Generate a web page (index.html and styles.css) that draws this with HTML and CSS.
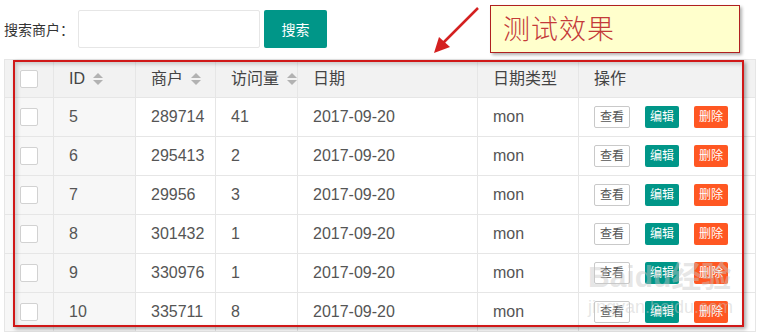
FILE: index.html
```html
<html>

<head>
  <link rel="stylesheet" href="styles.css">
</head>

<body>
  <div class="search-bar">
    <span class="search-label">搜索商户：</span>
    <input class="search-input" type="text">
    <button class="btn btn-main">搜索</button>
  </div>

  <table class="data-table">
    <colgroup>
      <col style="width: 49px">
      <col style="width: 82px">
      <col style="width: 80px">
      <col style="width: 82px">
      <col style="width: 180px">
      <col style="width: 101px">
      <col style="width: 177px">
    </colgroup>
    <thead>
      <tr>
        <th><span class="check"></span></th>
        <th>ID <span class="sort"><i class="up"></i><i class="down"></i></span></th>
        <th>商户 <span class="sort"><i class="up"></i><i class="down"></i></span></th>
        <th>访问量 <span class="sort"><i class="up"></i><i class="down"></i></span></th>
        <th>日期</th>
        <th>日期类型</th>
        <th>操作</th>
      </tr>
    </thead>
    <tbody>
      <tr>
        <td class="fixed"><span class="check"></span></td>
        <td class="fixed">5</td>
        <td>289714</td>
        <td>41</td>
        <td>2017-09-20</td>
        <td>mon</td>
        <td><div class="ops"><span class="btn-xs plain">查看</span><span class="btn-xs green">编辑</span><span class="btn-xs orange">删除</span></div></td>
      </tr>
      <tr>
        <td class="fixed"><span class="check"></span></td>
        <td class="fixed">6</td>
        <td>295413</td>
        <td>2</td>
        <td>2017-09-20</td>
        <td>mon</td>
        <td><div class="ops"><span class="btn-xs plain">查看</span><span class="btn-xs green">编辑</span><span class="btn-xs orange">删除</span></div></td>
      </tr>
      <tr>
        <td class="fixed"><span class="check"></span></td>
        <td class="fixed">7</td>
        <td>29956</td>
        <td>3</td>
        <td>2017-09-20</td>
        <td>mon</td>
        <td><div class="ops"><span class="btn-xs plain">查看</span><span class="btn-xs green">编辑</span><span class="btn-xs orange">删除</span></div></td>
      </tr>
      <tr>
        <td class="fixed"><span class="check"></span></td>
        <td class="fixed">8</td>
        <td>301432</td>
        <td>1</td>
        <td>2017-09-20</td>
        <td>mon</td>
        <td><div class="ops"><span class="btn-xs plain">查看</span><span class="btn-xs green">编辑</span><span class="btn-xs orange">删除</span></div></td>
      </tr>
      <tr>
        <td class="fixed"><span class="check"></span></td>
        <td class="fixed">9</td>
        <td>330976</td>
        <td>1</td>
        <td>2017-09-20</td>
        <td>mon</td>
        <td><div class="ops"><span class="btn-xs plain">查看</span><span class="btn-xs green">编辑</span><span class="btn-xs orange">删除</span></div></td>
      </tr>
      <tr>
        <td class="fixed"><span class="check"></span></td>
        <td class="fixed">10</td>
        <td>335711</td>
        <td>8</td>
        <td>2017-09-20</td>
        <td>mon</td>
        <td><div class="ops"><span class="btn-xs plain">查看</span><span class="btn-xs green">编辑</span><span class="btn-xs orange">删除</span></div></td>
      </tr>
    </tbody>
  </table>

  <!-- 截图上的标注 -->
  <div class="mark-box"></div>
  <svg class="mark-arrow" width="60" height="60" viewBox="0 0 60 60">
    <line x1="54" y1="6" x2="18" y2="42" stroke="#d42020" stroke-width="2.5" />
    <polygon points="10,51 15,35 26,45" fill="#d42020" />
  </svg>
  <div class="mark-note">测试效果</div>
  <div class="watermark">Baidu经验<br><small>jingyan.baidu.com</small></div>
</body>

</html>
```

FILE: styles.css
```css
body {
  margin: 0;
  padding: 10px 4px 0;
  font-family: "Liberation Sans", "Noto Sans CJK SC", sans-serif;
  font-size: 14px;
  color: #555;
  background: #fff;
  position: relative;
}

/* 搜索栏 */
.search-bar {
  display: flex;
  align-items: center;
  height: 38px;
  margin-bottom: 11px;
}

.search-label {
  color: #333;
  width: 70px;
}

.search-input {
  width: 182px;
  height: 38px;
  box-sizing: border-box;
  border: 1px solid #e6e6e6;
  border-radius: 2px;
  margin: 0 4px;
  outline: none;
}

.btn-main {
  width: 63px;
  height: 38px;
  border: none;
  border-radius: 2px;
  background: #009688;
  color: #fff;
  font-size: 14px;
  font-family: inherit;
  padding: 0;
}

/* 表格 */
.data-table {
  width: 751px;
  table-layout: fixed;
  border-collapse: collapse;
}

.data-table th,
.data-table td {
  border: 1px solid #e6e6e6;
  height: 39px;
  box-sizing: border-box;
  padding: 0 15px;
  line-height: 20px;
  text-align: left;
  font-weight: normal;
  white-space: nowrap;
}

.data-table th {
  height: 38px;
  background: #f2f2f2;
  color: #444;
}

.data-table td.fixed {
  background: #f7f7f7;
}

.check {
  display: inline-block;
  width: 16px;
  height: 16px;
  border: 1px solid #d2d2d2;
  border-radius: 2px;
  background: #fff;
  vertical-align: middle;
}

.sort {
  display: inline-block;
  width: 10px;
  height: 14px;
  position: relative;
  vertical-align: middle;
  margin-left: 4px;
}

.sort i {
  position: absolute;
  left: 0;
  border: 5px solid transparent;
}

.sort .up {
  top: -4px;
  border-bottom-color: #b2b2b2;
}

.sort .down {
  top: 8px;
  border-top-color: #b2b2b2;
}

.ops {
  display: flex;
  gap: 15px;
}

.btn-xs {
  display: inline-block;
  height: 22px;
  line-height: 22px;
  padding: 0 5px;
  font-size: 12px;
  border-radius: 2px;
  box-sizing: border-box;
}

.plain {
  border: 1px solid #c9c9c9;
  line-height: 20px;
  color: #555;
  background: #fff;
}

.green {
  background: #009688;
  color: #fff;
}

.orange {
  background: #ff5722;
  color: #fff;
}

/* 标注层 */
.mark-box {
  position: absolute;
  left: 13px;
  top: 60px;
  width: 727px;
  height: 263px;
  border: 2px solid #d01818;
  box-shadow: 2px 2px 4px rgba(0, 0, 0, .35), inset 2px 2px 4px rgba(0, 0, 0, .18);
}

.mark-arrow {
  position: absolute;
  left: 424px;
  top: 2px;
}

.mark-note {
  position: absolute;
  left: 490px;
  top: 5px;
  width: 250px;
  height: 48px;
  box-sizing: border-box;
  border: 1px solid #b02020;
  background: #ffffcc;
  box-shadow: 2px 2px 3px rgba(0, 0, 0, .3);
  color: #c43a3a;
  font-family: "Noto Sans CJK SC", sans-serif;
  font-weight: 300;
  font-size: 27px;
  letter-spacing: 1px;
  line-height: 44px;
  padding-left: 12px;
}

.watermark {
  position: absolute;
  left: 588px;
  top: 262px;
  color: rgba(200, 200, 200, .45);
  font-size: 30px;
  line-height: 30px;
  font-weight: bold;
  pointer-events: none;
}

.watermark small {
  font-size: 18px;
  font-weight: normal;
}
```
